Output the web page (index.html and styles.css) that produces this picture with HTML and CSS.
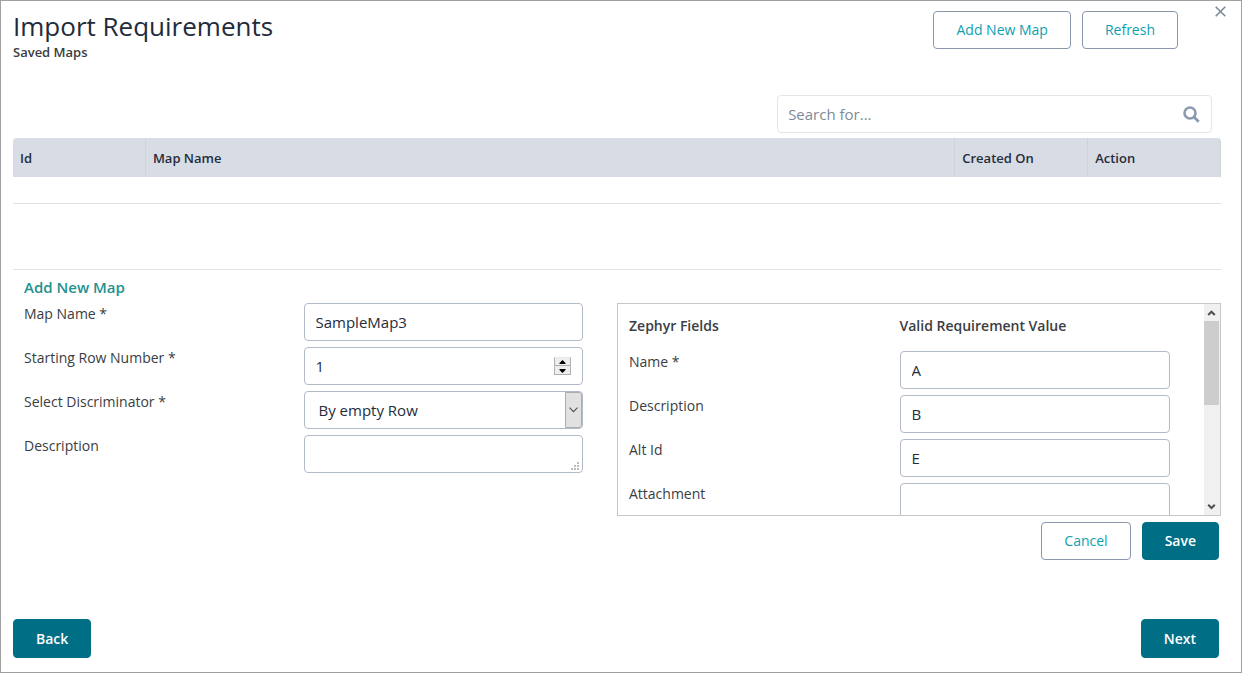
FILE: index.html
```html
<!DOCTYPE html>
<html lang="en">
<head>
<meta charset="utf-8">
<title>Import Requirements</title>
<meta name="viewport" content="width=device-width, initial-scale=1">
<link rel="stylesheet" href="styles.css">
</head>
<body>
<main class="dialog">
  <button class="close" type="button" aria-label="Close">
    <svg width="11" height="11" viewBox="0 0 11 11"><path d="M.7.7l9.6 9.6M10.3.7L.7 10.3" fill="none" stroke="#7b8a9a" stroke-width="1.6"/></svg>
  </button>
  <header class="header">
    <div>
      <h1 class="title">Import Requirements</h1>
      <h2 class="subtitle">Saved Maps</h2>
    </div>
    <div class="actions">
      <button class="btn btn-outline" type="button">Add New Map</button>
      <button class="btn btn-outline" type="button">Refresh</button>
    </div>
  </header>

  <form class="search" role="search">
    <input class="search-input" type="search" placeholder="Search for..." aria-label="Search for">
    <button class="search-btn" type="button" aria-label="Search">
      <svg width="17" height="17" viewBox="0 0 17 17" fill="none" stroke="#8c9ab0"><circle cx="7" cy="7" r="5.5" stroke-width="2.6"/><path d="M11 11l4.7 4.7" stroke-width="2.8"/></svg>
    </button>
  </form>

  <table class="maps">
    <thead>
      <tr><th class="col-small">Id</th><th>Map Name</th><th class="col-small">Created On</th><th class="col-small">Action</th></tr>
    </thead>
  </table>
  <div class="maps-empty"></div>

  <form class="editor">
    <h3 class="editor-title">Add New Map</h3>
    <div class="editor-columns">
      <div class="fields">
        <label for="map-name">Map Name *</label>
        <input class="control" id="map-name" type="text" value="SampleMap3">
        <label for="start-row">Starting Row Number *</label>
        <div class="control-wrap">
          <input class="control number" id="start-row" type="number" value="1">
          <div class="spinner">
            <button class="spin" type="button" aria-label="Increase"><svg width="7" height="4" viewBox="0 0 7 4"><path d="M3.5 0L6.5 3v1h-6V3z"/></svg></button>
            <button class="spin" type="button" aria-label="Decrease"><svg width="7" height="4" viewBox="0 0 7 4"><path d="M3.5 4L6.5 1V0h-6v1z"/></svg></button>
          </div>
        </div>
        <label for="discriminator">Select Discriminator *</label>
        <div class="control-wrap">
          <select class="control select" id="discriminator"><option>By empty Row</option></select>
          <span class="select-arrow"><svg width="9" height="6" viewBox="0 0 9 6"><path d="M.5.7l4 4 4-4" fill="none" stroke="#505050" stroke-width="1.1"/></svg></span>
        </div>
        <label for="description">Description</label>
        <div class="control-wrap">
          <textarea class="control area" id="description" rows="1"></textarea>
          <svg class="grip" width="8" height="8" viewBox="0 0 8 8" fill="#bcbcbc"><path d="M6 0h2v2H6zM3 3h2v2H3zM6 3h2v2H6zM0 6h2v2H0zM3 6h2v2H3zM6 6h2v2H6z"/></svg>
        </div>
      </div>

      <div class="mapping">
        <div class="mapping-view">
          <div class="mapping-head"><span>Zephyr Fields</span><span>Valid Requirement Value</span></div>
          <div class="fields">
            <label for="f-name">Name *</label><input class="control" id="f-name" type="text" value="A">
            <label for="f-desc">Description</label><input class="control" id="f-desc" type="text" value="B">
            <label for="f-alt">Alt Id</label><input class="control" id="f-alt" type="text" value="E">
            <label for="f-att">Attachment</label><input class="control" id="f-att" type="text">
          </div>
        </div>
        <div class="scrollbar">
          <svg class="scroll-arrow" width="16" height="17" viewBox="0 0 16 17"><path d="M4.2 11L7.500 7.700l3.300 3.300" fill="none" stroke="#505050" stroke-width="2"/></svg>
          <div class="scroll-thumb"></div>
          <svg class="scroll-arrow scroll-down" width="16" height="17" viewBox="0 0 16 17"><path d="M4.200 6.700L7.500 10l3.300-3.300" fill="none" stroke="#505050" stroke-width="2"/></svg>
        </div>
      </div>
    </div>
    <div class="editor-actions">
      <button class="btn btn-outline" type="button">Cancel</button>
      <button class="btn btn-primary" type="button">Save</button>
    </div>
  </form>

  <footer class="footer">
    <button class="btn btn-primary" type="button">Back</button>
    <button class="btn btn-primary" type="button">Next</button>
  </footer>
</main>
</body>
</html>
```

FILE: styles.css
```css
* { box-sizing: border-box; }

body {
  margin: 0;
  background: #fff;
  color: #3a3d42;
  font: 14px/20px "Open Sans", "Noto Sans", sans-serif;
}

button, input, select, textarea { font: inherit; }
button { cursor: pointer; }
h1, h2, h3 { margin: 0; }

.dialog {
  position: relative;
  display: flex;
  flex-direction: column;
  min-height: 100vh;
  padding: 10px 20px 14px 12px;
  border: 1px solid #a0a0a0;
}

.close {
  position: absolute;
  top: 5px;
  right: 15px;
  display: flex;
  padding: 0;
  border: 0;
  background: none;
}

.header {
  display: flex;
  justify-content: space-between;
  padding-right: 43px;
}

.title {
  color: #222b3a;
  font-size: 26px;
  font-weight: 400;
  line-height: 30px;
}

.subtitle {
  font-size: 13px;
  font-weight: 600;
  line-height: 22px;
}

.actions { display: flex; gap: 11px; align-items: flex-start; }

.btn {
  height: 38px;
  padding: 0 22px;
  border: 1px solid #8a98ae;
  border-radius: 4px;
  white-space: nowrap;
}

.btn-outline { background: #fff; color: #0e9fb2; }

.btn-primary {
  border-color: #006e85;
  background: #006e85;
  color: #fff;
  font-weight: 600;
}

.search {
  display: flex;
  align-self: flex-end;
  width: 36%;
  height: 38px;
  margin: 32px 9px 5px 0;
  border: 1px solid #e3e5e8;
  border-radius: 4px;
}

.search-input {
  flex: 1;
  min-width: 0;
  padding: 0 10px;
  border: 0;
  background: none;
  font-size: 15px;
  appearance: none;
}

.search-input::placeholder { color: #7d8b99; }

.search-btn {
  display: flex;
  align-items: center;
  padding: 0 11px;
  border: 0;
  background: none;
}

.maps {
  width: 100%;
  border-spacing: 0;
  table-layout: fixed;
}

.maps th {
  height: 39px;
  padding: 0 7px;
  border-right: 1px solid #d0d2d6;
  background: #d8dce4;
  color: #252d3b;
  font-size: 13px;
  font-weight: 600;
  text-align: left;
}

.maps th:first-child { border-top-left-radius: 4px; }
.maps th:last-child { border-top-right-radius: 4px; }
.col-small { width: 11%; }

.maps-empty {
  height: 27px;
  border-bottom: 1px solid #e2e2e2;
}

.editor {
  margin-top: 65px;
  border-top: 1px solid #e2e2e2;
}

.editor-title {
  padding: 7px 11px 6px;
  color: #23918f;
  font-size: 15px;
  font-weight: 600;
  line-height: 20px;
}

.editor-columns { display: grid; grid-template-columns: 1fr 1fr; }

.fields {
  display: grid;
  grid-template-columns: 1fr 1fr;
  grid-auto-rows: 38px;
  row-gap: 6px;
  padding: 0 34px 0 11px;
}

.fields label { line-height: 22px; }

.control-wrap { position: relative; }

.control {
  display: block;
  width: 100%;
  height: 38px;
  padding: 0 11px;
  border: 1px solid #b2bac9;
  border-radius: 4px;
  background: #fff;
  color: #252d3b;
  font-size: 15px;
}

.number { appearance: textfield; }
.number::-webkit-inner-spin-button { appearance: none; margin: 0; }
.select { appearance: none; padding: 0 30px 0 14px; }
.area { padding: 8px 11px; resize: none; overflow: hidden; }

.spinner {
  position: absolute;
  top: 10px;
  right: 12px;
  display: grid;
  width: 17px;
  height: 18px;
}

.spin {
  display: flex;
  align-items: center;
  justify-content: center;
  padding: 0;
  border: 1px solid #b0b0b0;
  border-top-color: #e8e8e8;
  background: #eee;
}

.select-arrow {
  position: absolute;
  top: 1px;
  right: 1px;
  bottom: 1px;
  display: flex;
  align-items: center;
  justify-content: center;
  width: 17px;
  border: 1px solid #adadad;
  border-radius: 0 3px 3px 0;
  background: #e1e1e1;
  pointer-events: none;
}

.grip {
  position: absolute;
  right: 4px;
  bottom: 3px;
  pointer-events: none;
}

.mapping {
  display: flex;
  height: 213px;
  border: 1px solid #c6c6c6;
}

.mapping-view { flex: 1; overflow: hidden; }

.mapping-head {
  display: grid;
  grid-template-columns: 1fr 1fr;
  padding: 12px 34px 15px 11px;
  font-weight: 600;
}

.scrollbar {
  display: flex;
  flex-direction: column;
  width: 16px;
  background: #f0f0f0;
}

.scroll-thumb { width: 15px; height: 84px; background: #cdcdcd; }
.scroll-down { margin-top: auto; }

.editor-actions {
  display: flex;
  justify-content: flex-end;
  gap: 11px;
  padding: 6px 2px 0;
}

.footer {
  display: flex;
  justify-content: space-between;
  margin-top: auto;
  padding-right: 2px;
}

.footer .btn { height: 39px; }
```
